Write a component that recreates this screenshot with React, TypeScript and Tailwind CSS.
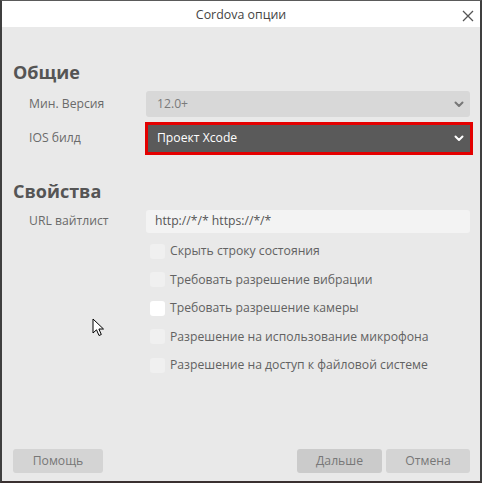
import React from "react";

const font = { fontFamily: '"Open Sans", "Noto Sans", sans-serif' };

function Chevron({ color }: { color: string }) {
  return (
    <svg width="10" height="7" viewBox="0 0 10 7" className="shrink-0">
      <path d="M1.5 1.5 L5 5 L8.5 1.5" fill="none" stroke={color} strokeWidth="2" strokeLinecap="round" strokeLinejoin="round" />
    </svg>
  );
}

function Check({ label, white }: { label: string; white?: boolean }) {
  return (
    <div className="h-[28.5px] flex items-center">
      <div className={`w-[15px] h-[15px] rounded-[3px] ml-[4px] ${white ? "bg-white" : "bg-[#f0f0f0]"}`} />
      <span className="ml-[5px] text-[12.2px] text-[#626262] leading-none">{label}</span>
    </div>
  );
}

export default function App() {
  return (
    <div
      style={font}
      className="w-[482px] h-[483px] flex flex-col border-t border-t-[#5a5a5a] border-l-2 border-l-[#3f3f3f] border-r-2 border-r-[#3f3f3f] border-b-2 border-b-[#3a3030] bg-[#e9e9e9] relative overflow-hidden"
    >
      <div className="h-[26px] bg-white relative flex items-center justify-center shrink-0">
        <span className="text-[12.4px] text-[#444] leading-none mt-[2px]">Cordova опции</span>
        <svg width="12" height="12" viewBox="0 0 12 12" className="absolute right-[6px] top-[9px]">
          <path d="M1 1 L11 11 M11 1 L1 11" stroke="#555" strokeWidth="1.3" />
        </svg>
      </div>
      <div className="flex-1 flex flex-col pl-[11px] pr-[10px] pt-[33px] pb-[8px]">
        <div className="h-[24px] flex items-center text-[18px] font-bold text-[#555] leading-none">Общие</div>

        <div className="flex items-center mt-[7px] h-[26px]">
          <div className="w-[133px] pl-[16px] text-[12.2px] text-[#6a6a6a]">Мин. Версия</div>
          <div className="flex-1 h-[26px] bg-[#d8d8d8] rounded-[3px] flex items-center justify-between pl-[11px] pr-[6px]">
            <span className="text-[12.2px] text-[#7a7a7a]">12.0+</span>
            <Chevron color="#777" />
          </div>
        </div>

        <div className="flex items-center mt-[5px] h-[33px]">
          <div className="w-[132px] pl-[16px] text-[12.2px] text-[#6a6a6a]">IOS билд</div>
          <div className="flex-1 -mr-[3px] h-[33px] border-[3px] border-[#e30000] bg-[#5a5a5a] flex items-center justify-between pl-[9px] pr-[6px]">
            <span className="text-[12.2px] text-white">Проект Xcode</span>
            <Chevron color="#ffffff" />
          </div>
        </div>

        <div className="h-[24px] mt-[24px] flex items-center text-[18px] font-bold text-[#555] leading-none">Свойства</div>

        <div className="flex items-center mt-[7px] h-[23px]">
          <div className="w-[133px] pl-[16px] text-[12.2px] text-[#6a6a6a]">URL вайтлист</div>
          <div className="flex-1 h-[23px] bg-[#f3f3f3] rounded-[3px] flex items-center pl-[9px]">
            <span className="text-[12.2px] text-[#555]">http://*/* https://*/*</span>
          </div>
        </div>

        <div className="flex flex-col mt-[4px] pl-[133px]">
          <Check label="Скрыть строку состояния" />
          <Check label="Требовать разрешение вибрации" />
          <Check label="Требовать разрешение камеры" white />
          <Check label="Разрешение на использование микрофона" />
          <Check label="Разрешение на доступ к файловой системе" />
        </div>

        <div className="mt-auto flex items-center h-[24px]">
          <div className="w-[90px] h-[24px] bg-[#d4d4d4] rounded-[3px] flex items-center justify-center text-[12.2px] text-[#777]">Помощь</div>
          <div className="flex-1" />
          <div className="w-[85px] h-[24px] bg-[#cbcbcb] rounded-[3px] flex items-center justify-center text-[12.2px] text-[#777]">Дальше</div>
          <div className="w-[84px] ml-[4px] h-[24px] bg-[#d4d4d4] rounded-[3px] flex items-center justify-center text-[12.2px] text-[#777]">Отмена</div>
        </div>
      </div>

      <svg width="14" height="20" viewBox="0 0 14 20" className="absolute left-[90px] top-[317px]">
        <path d="M1 1 L1 15 L4.5 11.8 L7 17.5 L9.3 16.5 L6.9 11 L11.5 11 Z" fill="white" stroke="black" strokeWidth="1" strokeLinejoin="miter" />
      </svg>
    </div>
  );
}
